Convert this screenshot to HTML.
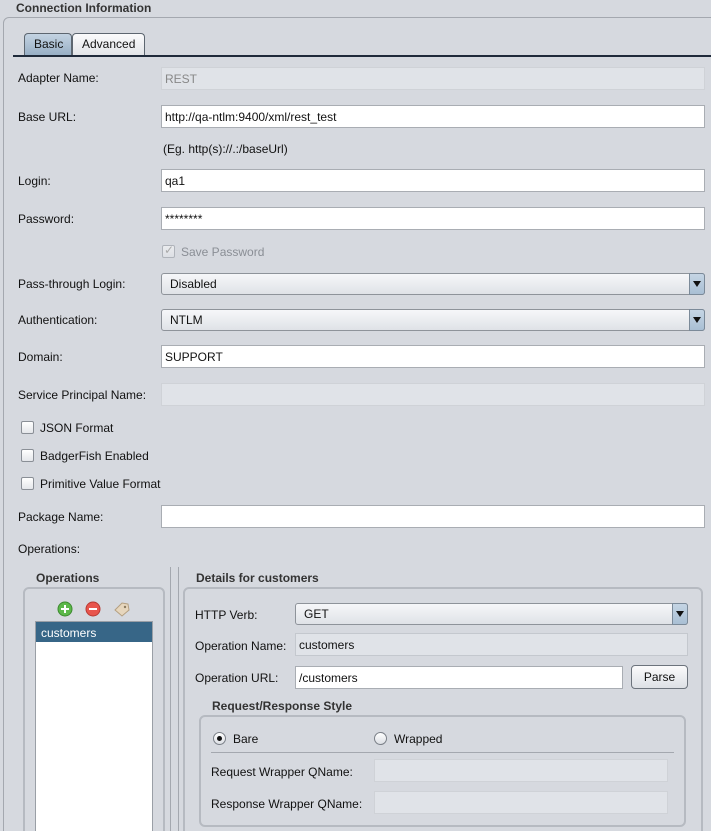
<!DOCTYPE html>
<html style="overflow:hidden"><head><style>
html,body{overflow:hidden}
body{margin:0;width:711px;height:831px;background:#d6d9df;font-family:"Liberation Sans",sans-serif;font-size:12px;color:#111;position:relative}
.a{position:absolute}
.t{position:absolute;white-space:nowrap}
.b{font-weight:bold;color:#333}
.in{position:absolute;background:#fff;border:1px solid #a9adb3;box-sizing:border-box;height:23px;padding:4px 3px;font-size:12px}
.dis{background:#e0e3e8;border-color:#cfd2d7;color:#888}
.cb{position:absolute;background:linear-gradient(#f6f7f9,#dfe2e7);border:1px solid #8e939a;border-radius:3px;box-sizing:border-box;height:22px;padding:3px 8px;font-size:12px}
.cb .ar{position:absolute;right:-1px;top:-1px;width:16px;height:22px;background:linear-gradient(#c5d5e4,#a9bfd4);border:1px solid #7b8a99;border-radius:0 3px 3px 0;box-sizing:border-box}
.cb .ar:after{content:"";position:absolute;left:3px;top:7px;border-left:4px solid transparent;border-right:4px solid transparent;border-top:6px solid #111}
.chk{position:absolute;width:13px;height:13px;border:1px solid #8a8f96;border-radius:2px;background:linear-gradient(#fff,#e4e6ea);box-sizing:border-box}
.box{position:absolute;border:2px solid #b6bac1;border-radius:6px;box-sizing:border-box}
.rad{position:absolute;width:13px;height:13px;border:1px solid #7b8088;border-radius:50%;background:linear-gradient(#fff,#dcdfe4);box-sizing:border-box}
</style></head><body>
<div class="t b" style="left:16px;top:1px">Connection Information</div>
<div class="box" style="left:3px;top:17px;width:720px;height:830px;border-width:1px;border-color:#a4a8af"></div>
<div class="a" style="left:24px;top:33px;width:48px;height:22px;background:linear-gradient(#c3d3e2,#98afc5);border:1px solid #5d6670;border-bottom:none;border-radius:4px 4px 0 0;box-sizing:border-box"></div>
<div class="t" style="left:34px;top:37px">Basic</div>
<div class="a" style="left:72px;top:33px;width:73px;height:22px;background:linear-gradient(#fbfbfc,#e2e4e8);border:1px solid #5d6670;border-bottom:none;border-radius:4px 4px 0 0;box-sizing:border-box"></div>
<div class="t" style="left:82px;top:37px">Advanced</div>
<div class="a" style="left:13px;top:55px;width:698px;height:2px;background:#1f2a3a"></div>

<div class="t" style="left:18px;top:71px">Adapter Name:</div>
<div class="in dis" style="left:161px;top:67px;width:544px">REST</div>
<div class="t" style="left:18px;top:110px">Base URL:</div>
<div class="in" style="left:161px;top:105px;width:544px">http://qa-ntlm:9400/xml/rest_test</div>
<div class="t" style="left:163px;top:142px">(Eg. http(s)://.:/baseUrl)</div>
<div class="t" style="left:18px;top:174px">Login:</div>
<div class="in" style="left:161px;top:169px;width:544px">qa1</div>
<div class="t" style="left:18px;top:212px">Password:</div>
<div class="in" style="left:161px;top:207px;width:544px">********</div>
<div class="chk" style="left:162px;top:245px;opacity:.5"></div>
<div class="t" style="left:164px;top:243px;color:#aaa">✓</div>
<div class="t" style="left:181px;top:245px;color:#8a8e95">Save Password</div>
<div class="t" style="left:18px;top:277px">Pass-through Login:</div>
<div class="cb" style="left:161px;top:273px;width:544px">Disabled<div class="ar"></div></div>
<div class="t" style="left:18px;top:313px">Authentication:</div>
<div class="cb" style="left:161px;top:309px;width:544px">NTLM<div class="ar"></div></div>
<div class="t" style="left:18px;top:350px">Domain:</div>
<div class="in" style="left:161px;top:345px;width:544px">SUPPORT</div>
<div class="t" style="left:18px;top:388px">Service Principal Name:</div>
<div class="in dis" style="left:161px;top:383px;width:544px"></div>
<div class="chk" style="left:21px;top:421px"></div><div class="t" style="left:40px;top:421px">JSON Format</div>
<div class="chk" style="left:21px;top:449px"></div><div class="t" style="left:40px;top:449px">BadgerFish Enabled</div>
<div class="chk" style="left:21px;top:477px"></div><div class="t" style="left:40px;top:477px">Primitive Value Format</div>
<div class="t" style="left:18px;top:510px">Package Name:</div>
<div class="in" style="left:161px;top:505px;width:544px"></div>
<div class="t" style="left:18px;top:542px">Operations:</div>

<div class="t b" style="left:36px;top:571px">Operations</div>
<div class="box" style="left:23px;top:587px;width:142px;height:260px"></div>
<svg class="a" style="left:57px;top:601px" width="80" height="16">
<circle cx="8" cy="8" r="7" fill="#5cb84a" stroke="#3d8a30"/><rect x="4" y="7" width="8" height="2" fill="#fff"/><rect x="7" y="4" width="2" height="8" fill="#fff"/>
<circle cx="36" cy="8" r="7" fill="#e8554d" stroke="#b83a33"/><rect x="32" y="7" width="8" height="2" fill="#fff"/>
<path d="M58 9 L65 2 L71 3 L72 9 L65 15 Z" fill="#e6d6bd" stroke="#b49f80"/><circle cx="68" cy="6" r="1.2" fill="#8a7a60"/>
</svg>
<div class="a" style="left:35px;top:621px;width:118px;height:215px;background:#fff;border:1px solid #9a9fa6;box-sizing:border-box"></div>
<div class="a" style="left:36px;top:622px;width:116px;height:20px;background:#376687"></div>
<div class="t" style="left:41px;top:626px;color:#fff">customers</div>
<div class="a" style="left:170px;top:567px;width:1px;height:264px;background:#a4a8af"></div>
<div class="a" style="left:178px;top:567px;width:1px;height:264px;background:#a4a8af"></div>

<div class="t b" style="left:196px;top:571px">Details for customers</div>
<div class="box" style="left:183px;top:587px;width:520px;height:260px"></div>
<div class="t" style="left:195px;top:608px">HTTP Verb:</div>
<div class="cb" style="left:295px;top:603px;width:393px">GET<div class="ar"></div></div>
<div class="t" style="left:195px;top:639px">Operation Name:</div>
<div class="in dis" style="left:295px;top:633px;width:393px;color:#111;border-color:#c4c8ce">customers</div>
<div class="t" style="left:195px;top:671px">Operation URL:</div>
<div class="in" style="left:295px;top:666px;width:328px">/customers</div>
<div class="a" style="left:631px;top:665px;width:57px;height:24px;background:linear-gradient(#fbfbfc,#dde0e5);border:1px solid #6c737c;border-radius:4px;box-sizing:border-box;text-align:center;line-height:22px">Parse</div>
<div class="t b" style="left:212px;top:699px">Request/Response Style</div>
<div class="box" style="left:199px;top:715px;width:487px;height:112px"></div>
<div class="rad" style="left:213px;top:732px"></div><div class="a" style="left:217px;top:736px;width:5px;height:5px;border-radius:50%;background:#111"></div>
<div class="t" style="left:233px;top:732px">Bare</div>
<div class="rad" style="left:374px;top:732px"></div>
<div class="t" style="left:394px;top:732px">Wrapped</div>
<div class="a" style="left:211px;top:752px;width:463px;height:1px;background:#a4a8af"></div>
<div class="t" style="left:211px;top:765px">Request Wrapper QName:</div>
<div class="in dis" style="left:374px;top:759px;width:294px"></div>
<div class="t" style="left:211px;top:797px">Response Wrapper QName:</div>
<div class="in dis" style="left:374px;top:791px;width:294px"></div>
</body></html>
